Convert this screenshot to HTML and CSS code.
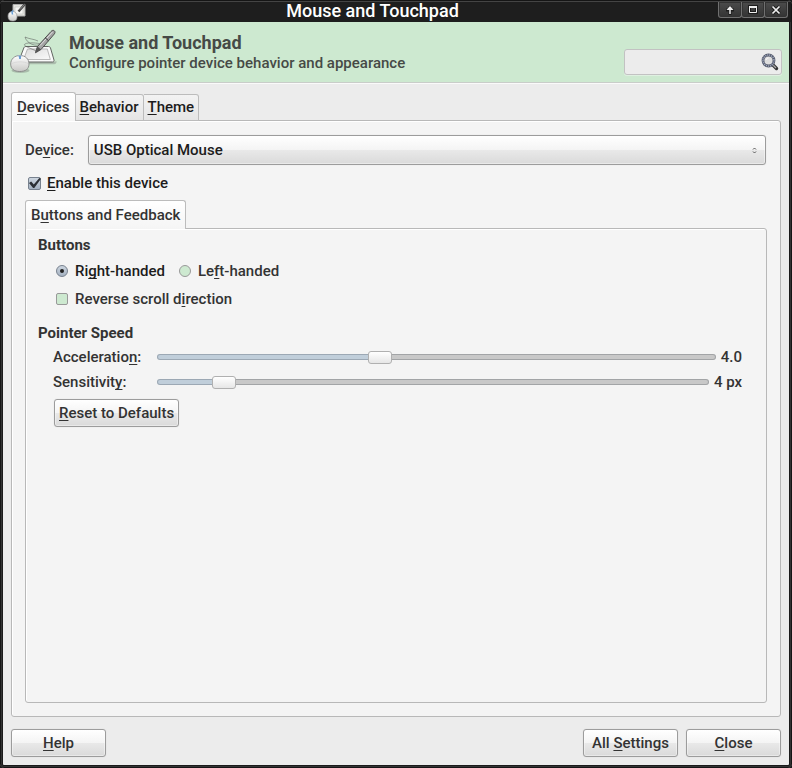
FILE: index.html
```html
<!DOCTYPE html>
<html lang="en">
<head>
<meta charset="utf-8">
<title>Mouse and Touchpad</title>
<link rel="stylesheet" href="styles.css">
</head>
<body>
<svg class="defs" aria-hidden="true">
  <defs>
    <linearGradient id="mouse-fill" x1="0" y1="0" x2="0" y2="1"><stop offset="0" stop-color="#fff"/><stop offset="1" stop-color="#c8c8c6"/></linearGradient>
    <linearGradient id="pad-fill" x1="0" y1="0" x2="1" y2="1"><stop offset="0" stop-color="#dcdcdc"/><stop offset="1" stop-color="#fafafa"/></linearGradient>
  </defs>
</svg>
<div class="window">
  <div class="titlebar">
    <svg class="title-icon" viewBox="0 0 20 20" aria-hidden="true">
      <path d="M6 2.500h12v11.500H6z" fill="#e4e4df" stroke="#aaa"/>
      <path d="M8 5h8v7H8z" fill="#f6f6f4" stroke="#c4c4c0" stroke-width=".6"/>
      <path d="M11.500 9.500 18 2" stroke="#444" stroke-width="2.400"/><path d="m13 7.500 4.500-5" stroke="#999" stroke-width=".8"/>
      <path d="M1 14c0-3 2-4.500 4.500-4.500S10 11 10 14.500 8.500 19 5.500 19 1 17.500 1 14z" fill="url(#mouse-fill)" stroke="#999" stroke-width=".7"/>
      <path d="M5.500 12.500 5 9.500l1.500-1" stroke="#6a9fd6" stroke-width="1.500" fill="none"/>
    </svg>
    <span class="title">Mouse and Touchpad</span>
    <div class="window-buttons">
      <button type="button" aria-label="Shade"><svg viewBox="0 0 12 12"><path d="M6 11V2M2 6h8" stroke="#1c1c1c" stroke-width="3" fill="none"/><path d="M6 10V3" stroke="#eee" stroke-width="1.500"/><path d="M2.500 6 6 2l3.500 4z" fill="#eee"/></svg></button>
      <button type="button" aria-label="Maximize"><svg viewBox="0 0 12 12"><path d="M2.500 2.500h7v6h-7z" stroke="#1c1c1c" stroke-width="3" fill="none"/><path d="M2.500 3v5.500h7V3" stroke="#eee" fill="none"/><path d="M2 3h8" stroke="#eee" stroke-width="2"/></svg></button>
      <button type="button" aria-label="Close window"><svg viewBox="0 0 12 12"><path d="m2.500 2.500 7 7m0-7-7 7" stroke="#1c1c1c" stroke-width="3.500"/><path d="m2.500 2.500 7 7m0-7-7 7" stroke="#eee" stroke-width="1.700"/></svg></button>
    </div>
  </div>

  <header class="banner">
    <svg class="banner-icon" viewBox="0 0 48 48" aria-hidden="true">
      <path d="M12 35h32c1 0 1.500-.6 1.200-1.500" stroke="#777" stroke-opacity=".4" stroke-width="2.500" fill="none"/>
      <path d="M16 18.500h22.500c1 0 1.700.5 2 1.500l3.500 12c.3 1.300-.2 2-1.500 2h-32c-1.300 0-1.800-.8-1.300-2l4.600-12c.4-1 1-1.500 2.200-1.500z" fill="#fafafa" stroke="#626562"/>
      <path d="M17.500 21h19.800l3 10.500H13.500z" fill="url(#pad-fill)" stroke="#aaa" stroke-width=".8"/>
      <path d="M28 24c-7-4-16-6-13-8s13-1 16 0c-5 3-14 0-16-7 4 2 9 2 13 4" fill="none" stroke="#555" stroke-width=".8" stroke-opacity=".65"/>
      <path d="m25.500 24.500 2-6L41 3.500c1-1.200 2.300-1.500 3.300-.7 1 .9.900 2 0 3.200L31 21.500z" fill="#a4a4a4" stroke="#444" stroke-width=".9"/>
      <path d="M30 17.500 42.500 4" stroke="#e2e2e2" stroke-width="1"/>
      <path d="m25 25.500 2.500-7 3.500 3z" fill="#555"/><path d="m35 9.500 3.500 3.300" stroke="#333"/>
      <ellipse cx="10.500" cy="42.500" rx="9" ry="2.500" fill="#555" fill-opacity=".3"/>
      <path d="M.7 36c0-5 3.800-8.500 9.300-8.500s9 3.500 9 8.500-3.500 7.500-9.200 7.500S.7 41 .7 36z" fill="url(#mouse-fill)" stroke="#888" stroke-width=".9"/>
      <path d="M2 35.500c4-2 12-2.300 16 0" stroke="#d4d4d4" fill="none" stroke-width=".8"/>
      <path d="m7.500 27.500 2.500 3.500 2-3.500z" fill="#a8c8ea"/><path d="M10 31V28" stroke="#5b90cb" stroke-width="1.600"/>
    </svg>
    <div class="banner-text">
      <h1>Mouse and Touchpad</h1>
      <p>Configure pointer device behavior and appearance</p>
    </div>
    <div class="search">
      <input type="text" aria-label="Search">
      <svg viewBox="0 0 18 18" aria-hidden="true"><path d="m11.500 11.500 4 4" stroke="#333" stroke-width="3.400" stroke-linecap="round"/><path d="m12 12 3 3" stroke="#aaa" stroke-width="1.300"/><circle cx="7.500" cy="7.500" r="5.500" fill="#dedede" stroke="#555b6c" stroke-width="2.800"/><circle cx="7.500" cy="7.500" r="5.500" fill="none" stroke="#a5adc2" stroke-width="1.600" stroke-dasharray="1 1"/><path d="M5 7c.4-1.500 1.200-2 2.500-2" stroke="#fff" fill="none"/></svg>
    </div>
  </header>

  <main class="content">
    <div class="tabs" role="tablist">
      <button class="tab active" type="button" role="tab" aria-selected="true"><u>D</u>evices</button>
      <button class="tab" type="button" role="tab" aria-selected="false"><u>B</u>ehavior</button>
      <button class="tab" type="button" role="tab" aria-selected="false"><u>T</u>heme</button>
    </div>
    <section class="panel outer">
      <div class="device-row">
        <label for="device">De<u>v</u>ice:</label>
        <div class="combo">
          <select id="device"><option>USB Optical Mouse</option></select>
          <svg viewBox="0 0 5 7" aria-hidden="true"><path d="M1 2.500 2.500 1 4 2.500M1 4.500 2.500 6 4 4.500" fill="none" stroke="#555"/></svg>
        </div>
      </div>
      <label class="option enable strong"><input type="checkbox" checked><span><u>E</u>nable this device</span></label>

      <div class="tabs" role="tablist">
        <button class="tab active" type="button" role="tab" aria-selected="true">B<u>u</u>ttons and Feedback</button>
      </div>
      <div class="panel inner">
        <h2>Buttons</h2>
        <div class="options">
          <label class="option strong"><input type="radio" name="hand" checked><span>Ri<u>g</u>ht-handed</span></label>
          <label class="option"><input type="radio" name="hand"><span>Le<u>f</u>t-handed</span></label>
        </div>
        <div class="options">
          <label class="option"><input type="checkbox"><span>Reverse scroll d<u>i</u>rection</span></label>
        </div>
        <h2 class="speed">Pointer Speed</h2>
        <div class="slider-row">
          <label for="accel">Acceleratio<u>n</u>:</label>
          <input id="accel" type="range" min="0.1" max="10" step="0.1" value="4" style="--fill: 40%">
          <output for="accel">4.0</output>
        </div>
        <div class="slider-row">
          <label for="sens">Sensitivit<u>y</u>:</label>
          <input id="sens" type="range" min="1" max="30" value="4" style="--fill: 12%">
          <output for="sens">4 px</output>
        </div>
        <button class="button reset" type="button"><u>R</u>eset to Defaults</button>
      </div>
    </section>
  </main>

  <footer class="actions">
    <button class="button help" type="button"><u>H</u>elp</button>
    <button class="button" type="button">All <u>S</u>ettings</button>
    <button class="button" type="button"><u>C</u>lose</button>
  </footer>
</div>
</body>
</html>
```
FILE: styles.css
```css
* { box-sizing: border-box; }

body {
  margin: 0;
  background: #1c1c1c;
  color: #333;
  font: 500 15px/20px Roboto, "Liberation Sans", sans-serif;
}

button, input, select { font: inherit; color: inherit; margin: 0; }
u { text-decoration-thickness: 1px; text-underline-offset: 2px; text-decoration-skip-ink: none; }
h1, h2, p { margin: 0; }
.defs { position: absolute; width: 0; height: 0; }

.window {
  display: flex;
  flex-direction: column;
  min-height: 100vh;
  border: 1px solid #151515;
  border-radius: 4px;
  background: #ececec;
  box-shadow: inset 0 0 0 1px #333, inset 0 0 0 2px #1b1b1b;
}

/* Title bar */
.titlebar {
  display: flex;
  height: 21px;
  border-top: 1px solid #444;
  background: #1e1e1e;
}
.title-icon { width: 20px; height: 20px; margin-left: 6px; }
.title { flex: 1; text-align: center; color: #fff; font-size: 18px; line-height: 18px; }
.window-buttons { display: flex; margin-right: 3px; }
.window-buttons button {
  display: grid;
  place-items: center;
  width: 24px;
  height: 16px;
  padding: 0;
  border: 1px solid #707070;
  border-top: 0;
  border-radius: 0 0 3px 3px;
  background: linear-gradient(#4c4c4c, #333);
  box-shadow: inset 0 0 0 1px #333;
}
.window-buttons button + button { margin-left: -1px; }
.window-buttons svg { width: 12px; height: 12px; }

/* Banner */
.banner {
  display: flex;
  margin: 0 2px;
  height: 61px;
  border-bottom: 1px solid #c9cdc9;
  background: #cde9d0;
  box-shadow: 0 1px #fafafa;
  color: #464a46;
}
.banner-icon { width: 48px; height: 48px; margin: 6px 11px 0 7px; }
.banner-text { flex: 1; padding-top: 10px; }
h1 { font-size: 18px; line-height: 21px; font-weight: 700; }
.search { position: relative; align-self: flex-start; width: 158px; margin: 27px 7px 0 0; }
.search input {
  display: block;
  width: 100%;
  height: 26px;
  padding: 0 28px 0 6px;
  border: 1px solid #c2c2c2;
  border-radius: 3px;
  background: #ececec;
  box-shadow: 0 1px #dff0e1;
}
.search svg { position: absolute; top: 4px; right: 3px; width: 18px; height: 18px; }

/* Notebooks */
.content { flex: 1; display: flex; flex-direction: column; padding: 9px 10px 0; }
.tabs { display: flex; align-items: flex-end; margin-bottom: -1px; }
.tab {
  position: relative;
  height: 27px;
  padding: 0 4px;
  border: 1px solid #bcbcbc;
  border-left-width: 0;
  border-radius: 0 3px 0 0;
  background: linear-gradient(#f3f3f3, #e5e5e5);
  color: #1c1c1c;
  line-height: 25px;
}
.tab.active {
  height: 29px;
  padding: 0 5px;
  border-left-width: 1px;
  border-bottom: 0;
  border-radius: 3px 3px 0 0;
  background: linear-gradient(#fff, #f5f5f5);
  color: #333;
  z-index: 1;
}
.panel {
  flex: 1;
  border: 1px solid #b8b8b8;
  border-radius: 0 3px 3px;
  background: #f4f4f4;
  box-shadow: inset 1px 1px #fff;
}
.outer { display: flex; flex-direction: column; padding: 14px 13px 13px; }
.inner { padding: 6px 24px 12px 12px; }

/* Form */
.device-row { display: flex; align-items: center; gap: 14px; padding-right: 1px; }
.combo { position: relative; flex: 1; }
.combo select, .button {
  border: 1px solid #9c9c9c;
  border-radius: 3px;
  background: linear-gradient(#fff, #f4f4f4 50%, #e9e9e9 50%, #dadada);
  box-shadow: inset 0 0 0 1px rgb(255 255 255 / 40%), 0 0 1px #ccc;
}
.combo select {
  display: block;
  appearance: none;
  width: 100%;
  height: 30px;
  padding: 0 24px 0 5px;
  color: #1c1c1c;
}
.combo svg { position: absolute; top: 12px; right: 9px; width: 5px; height: 7px; }

.option { display: flex; align-items: center; gap: 7px; }
.strong { color: #1c1c1c; }
.enable { margin: 8px 0 7px 3px; gap: 6px; }
.option input {
  appearance: none;
  display: grid;
  place-items: center;
  width: 12px;
  height: 12px;
  border: 1px solid #999;
  border-radius: 2px;
  background: #cde9d0;
}
.option input[type="radio"] { border-radius: 50%; }
.option input:checked { border-color: #77818e; background: linear-gradient(#ccd5df, #a4b1c1); }
.option input[type="radio"]:checked::before { content: ""; width: 4px; height: 4px; border-radius: 50%; background: #222; }
.enable input { width: 13px; height: 13px; }
.option input[type="checkbox"]:checked::before {
  content: "";
  width: 12px;
  height: 10px;
  background: #2b2f35;
  clip-path: polygon(0 50%, 18% 36%, 40% 64%, 86% 0, 100% 8%, 44% 100%, 34% 100%);
}

h2 { font-size: 15px; line-height: 20px; font-weight: 700; }
.options { display: flex; gap: 14px; margin: 6px 0 8px 18px; }
h2.speed { margin: 14px 0 4px; }
.slider-row { display: flex; align-items: center; margin: 0 0 5px 15px; }
.slider-row label { flex: 0 0 104px; }
.slider-row output { padding-left: 5px; }
.slider-row input {
  flex: 1;
  min-width: 0;
  appearance: none;
  height: 14px;
  background: none;
}
.slider-row input::-webkit-slider-runnable-track {
  height: 6px;
  border-radius: 3px;
  background: linear-gradient(90deg, #c0ceda var(--fill), #c8c8c8 var(--fill));
  box-shadow: inset 0 0 0 1px rgb(40 50 60 / 24%);
}
.slider-row input::-webkit-slider-thumb {
  appearance: none;
  width: 24px;
  height: 13px;
  margin-top: -3px;
  border: 1px solid #b0b0b0;
  border-radius: 3px;
  background: linear-gradient(#fff, #e6e6e6);
}

.button { height: 28px; min-width: 95px; padding: 0 4px; }
.reset { display: block; margin: 7px 0 0 16px; }

.actions { display: flex; gap: 8px; padding: 12px 10px 10px; }
.help { margin-right: auto; }
```
